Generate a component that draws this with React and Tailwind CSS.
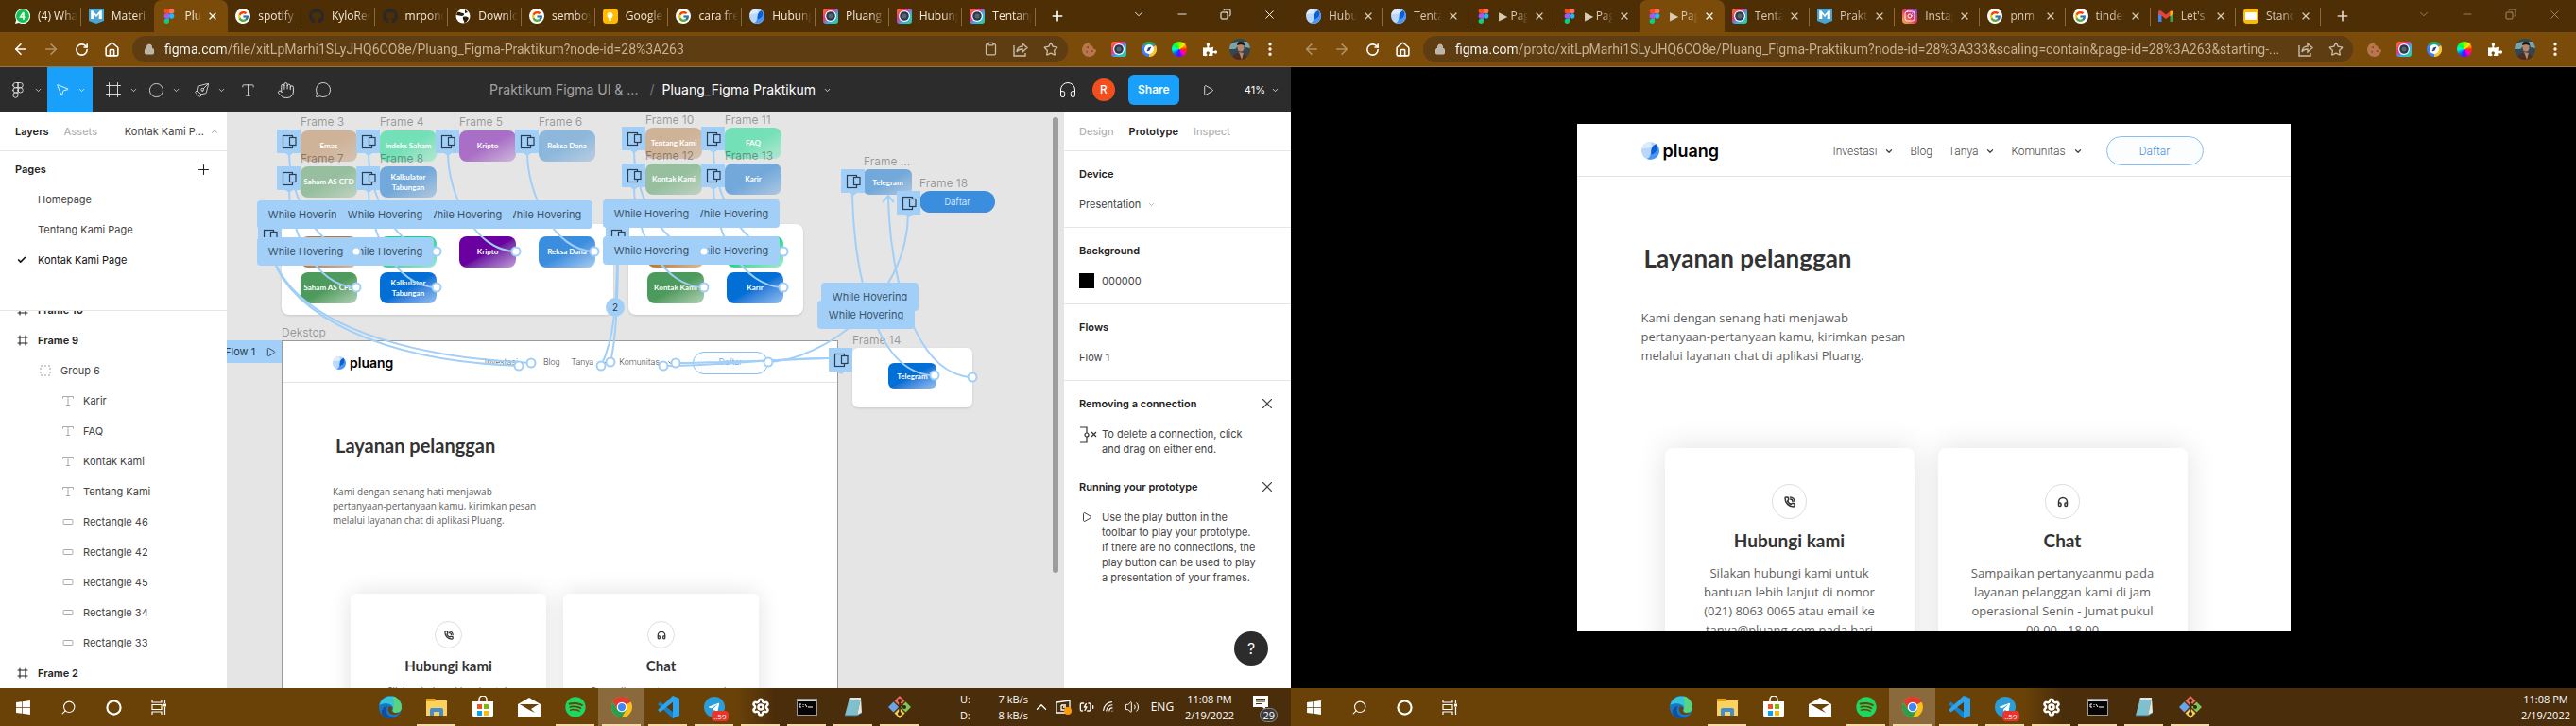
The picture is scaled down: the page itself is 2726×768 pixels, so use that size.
import React from "react";
import {
  ArrowLeft, ArrowRight, RotateCw, House, Lock, Clipboard, Star, EllipsisVertical, X, Plus, Minus,
  ChevronDown, ChevronUp, Frame as FrameIcon, Circle, PenTool, Type, Hand, MessageCircle, Figma, Headphones,
  Play, MousePointer2, Check, Search, Wifi, Volume2, BatteryCharging, Copy, Settings, PhoneCall,
  Instagram,
} from "lucide-react";
import { FaGithub, FaSpotify, FaPuzzlePiece, FaCookieBite, FaWindows, FaTelegramPlane, FaLightbulb } from "react-icons/fa";
import { FcGoogle } from "react-icons/fc";

/* ---------- small drawings ---------- */

const FigmaMark = () => (
  <svg viewBox="0 0 16 24" className="h-4 w-4">
    <path d="M4 0h4v8H4a4 4 0 010-8z" fill="#f24e1e" />
    <path d="M8 0h4a4 4 0 010 8H8z" fill="#ff7262" />
    <path d="M4 8h4v8H4a4 4 0 010-8z" fill="#a259ff" />
    <circle cx="12" cy="12" r="4" fill="#1abcfe" />
    <path d="M4 16h4v4a4 4 0 11-4-4z" fill="#0acf83" />
  </svg>
);

const PluangMark = ({ className = "h-4 w-4" }) => (
  <svg viewBox="0 0 20 20" className={className}>
    <circle cx="10" cy="10" r="10" fill="#b9d7fb" />
    <path d="M10 0a10 10 0 00-9.800 8 L12 6z" fill="#dcebfd" />
    <path d="M20 10A10 10 0 016 19c4-1 4-6 6-9s5-5 6-5.500A10 10 0 0120 10z" fill="#4a95f7" />
    <path d="M16.500 2.400c2.500 4 1.500 10-5.500 12-1-6 1-10.500 5.500-12z" fill="#0b5fd0" />
  </svg>
);

const CameraMark = () => (
  <svg viewBox="0 0 16 16" className="h-4 w-4">
    <defs>
      <linearGradient id="cam" x1="0" y1="0" x2="1" y2="1">
        <stop offset="0" stopColor="#ff7a1a" />
        <stop offset=".35" stopColor="#ec2f87" />
        <stop offset=".65" stopColor="#29b6f6" />
        <stop offset="1" stopColor="#35d07f" />
      </linearGradient>
    </defs>
    <rect width="16" height="16" rx="3" fill="url(#cam)" />
    <circle cx="8" cy="8" r="6" fill="#fff" />
    <circle cx="8" cy="8" r="4.800" fill="#2b3a45" />
    <circle cx="8" cy="8" r="2.500" fill="#536675" />
  </svg>
);

const ChatMark = () => (
  <svg viewBox="0 0 16 16" className="h-4 w-4">
    <path d="M0 16l1.200-4A8 8 0 114 14.900z" fill="#fff" />
    <circle cx="8" cy="8" r="7" fill="#12c350" />
    <path d="M8.800 4L5.500 9h5M9 4v8" stroke="#fff" strokeWidth="1.500" fill="none" />
  </svg>
);

const MediumMark = () => (
  <svg viewBox="0 0 16 16" className="h-4 w-4">
    <path d="M0 0h16v13l-8 3-8-3z" fill="#4aa5d3" />
    <path d="M3 11V3h1l4 5 4-5h1v8M4.500 4v7M11.500 4v7" stroke="#fff" strokeWidth="1.600" fill="none" />
  </svg>
);

const GlobeMark = () => (
  <svg viewBox="0 0 16 16" className="h-4 w-4">
    <circle cx="8" cy="8" r="7.500" fill="#fff" />
    <path d="M2 4c3-1 4 1 6 1s1 3-1 3-4-1-6-1zM8 9c3-1 5 0 6 1-1 3-3 5-5 5 1-2-2-3-1-6zM10 1l3 3-3 1z" fill="#2c1c05" />
  </svg>
);

const KeepMark = () => (
  <span className="flex h-4 w-4 items-center justify-center rounded-sm bg-[#ffbb00] text-[9px] text-white">
    <FaLightbulb />
  </span>
);

const GoogleMark = () => (
  <span className="flex h-4 w-4 items-center justify-center rounded-full bg-white text-[13px]">
    <FcGoogle />
  </span>
);

const MailMark = () => (
  <svg viewBox="0 0 16 12" className="h-4 w-4">
    <path d="M0 12V1h3.500v11z" fill="#4285f4" />
    <path d="M12.500 12V1H16v11z" fill="#34a853" />
    <path d="M0 1.500C0 0 2-.5 3 .5l5 4 5-4c1-1 3-.5 3 1V3L8 9 0 3z" fill="#ea4335" />
    <path d="M12.500 1L16 .8V4l-3.500 2.500z" fill="#fbbc04" />
  </svg>
);

const SlidesMark = () => (
  <span className="flex h-4 w-4 items-center justify-center rounded-sm bg-[#ffba00]">
    <span className="h-2 w-3 bg-white" />
  </span>
);

const InstaMark = () => (
  <span className="flex h-4 w-4 items-center justify-center rounded bg-linear-to-tr from-[#fdb32f] via-[#e4315f] to-[#7a3bd0] text-white">
    <Instagram size={12} />
  </span>
);

const GithubMark = () => <FaGithub size={16} color="#24292e" />;

const CompassMark = () => (
  <svg viewBox="0 0 16 16" className="h-4 w-4">
    <circle cx="8" cy="8" r="8" fill="#3d7ff0" />
    <path d="M2 2.500a8 8 0 0112 0L8 8z" fill="#27a75b" />
    <path d="M15 4a8 8 0 01-7 12V8z" fill="#fcc32c" />
    <circle cx="8" cy="8" r="5" fill="#fff" />
    <path d="M5.500 10.500l1.500-4 3.500-1-2 4z" fill="#1e4b7c" />
  </svg>
);

const WheelMark = () => (
  <span className="h-4 w-4 rounded-full bg-[conic-gradient(#7dff00,#ffe600,#ff2a00,#ff00c8,#5a00ff,#0066ff,#00ffd0,#00ff3c,#7dff00)]" />
);

const Avatar = () => (
  <svg viewBox="0 0 22 22" className="h-[22px] w-[22px]">
    <clipPath id="face"><circle cx="11" cy="11" r="11" /></clipPath>
    <g clipPath="url(#face)">
      <rect width="22" height="22" fill="#33474f" />
      <path d="M0 6l8-3 4 2-6 6H0zM15 3h7v7l-5-1z" fill="#7ea2ac" />
      <ellipse cx="12" cy="9" rx="3.500" ry="4.500" fill="#b9866b" />
      <path d="M8 7c0-5 8-5 8 0l-4-1z" fill="#17120f" />
      <path d="M3 22c1-8 6-7 9-7s6 1 8 7z" fill="#4c2b28" />
      <path d="M10 14l3 8 2-7z" fill="#b9866b" />
    </g>
  </svg>
);

/* ---------- browser chrome ---------- */

function Tab({ icon, title, active, before, closable, dim }) {
  return (
    <div
      className={
        "relative flex min-w-0 flex-1 items-center pl-2 pr-1 " +
        (active ? "rounded-t-lg bg-[#7b4b09]" : before ? "" : "after:absolute after:right-0 after:top-2 after:h-5 after:w-px after:bg-[#8a6a3a]")
      }
    >
      <button className="flex min-w-0 flex-1 items-center gap-2 text-left">
        <span className="flex h-4 w-4 shrink-0 items-center justify-center">{icon}</span>
        <span
          className={
            "min-w-0 flex-1 overflow-hidden whitespace-nowrap text-xs [mask-image:linear-gradient(90deg,#000_60%,transparent)] " +
            (dim ? "text-[#d8cbb5]" : "text-[#f5ead8]")
          }
        >
          {title}
        </span>
      </button>
      {(active || closable) && (
        <button aria-label="Close tab" className={"flex w-6 shrink-0 justify-center " + (active ? "text-white" : "text-[#d8cbb5]")}>
          <X size={12} strokeWidth={2.500} />
        </button>
      )}
    </div>
  );
}

function BrowserChrome({ tabs, url, backActive, clipboard, closable, dim }) {
  const activeIndex = tabs.findIndex((t) => t.active);
  return (
    <header className="shrink-0 font-['Open_Sans',sans-serif]">
      <div className="flex h-[34px] bg-[#4d2e05]">
        <div className="flex min-w-0 flex-1 pl-2">
          {tabs.map((t, i) => (
            <Tab key={i} {...t} before={i === activeIndex - 1} closable={closable} dim={dim} />
          ))}
        </div>
        <button aria-label="New tab" className={"flex w-[46px] items-center justify-center " + (dim ? "text-[#e0d5c5]" : "text-white")}>
          <Plus size={16} strokeWidth={2.500} />
        </button>
        <div className={"ml-10 flex pb-1 " + (dim ? "text-[#a08c6c]" : "text-white")}>
          <button aria-label="Search tabs" className="flex w-[46px] items-center justify-center"><ChevronDown size={14} strokeWidth={1.500} /></button>
          <button aria-label="Minimize" className="flex w-[46px] items-center justify-center"><Minus size={14} strokeWidth={1.500} /></button>
          <button aria-label="Restore" className="flex w-[46px] items-center justify-center"><Copy size={12} strokeWidth={2} className="-scale-x-100" /></button>
          <button aria-label="Close" className="flex w-[46px] items-center justify-center"><X size={15} strokeWidth={1.500} /></button>
        </div>
      </div>
      <div className="flex h-[37px] items-center border-b border-[#9a7440] bg-[#7b4b09] pl-1.5 pr-1.5 text-white">
        <button aria-label="Back" className={"flex w-8 justify-center " + (backActive ? "" : "text-[#b3936a]")}><ArrowLeft size={18} strokeWidth={2.200} /></button>
        <button aria-label="Forward" className="flex w-8 justify-center text-[#b3936a]"><ArrowRight size={18} strokeWidth={2.200} /></button>
        <button aria-label="Reload" className="flex w-8 justify-center"><RotateCw size={15} strokeWidth={2.500} /></button>
        <button aria-label="Home" className="flex w-8 justify-center"><House size={17} strokeWidth={2.200} /></button>
        <div className="ml-1.5 flex h-7 flex-1 items-center gap-2.5 rounded-full bg-[#5e3d12] pl-3 pr-0.5 text-[#c9bda8]">
          <Lock size={12} fill="#b9b4ac" className="shrink-0" />
          <input
            aria-label="Address"
            readOnly
            value={url}
            className="min-w-0 flex-1 truncate bg-[linear-gradient(90deg,#fff_65px,#c9b596_65px)] bg-clip-text font-['Roboto',sans-serif] text-sm text-transparent outline-none"
          />
          <div className="flex">
            {clipboard && <button aria-label="Clipboard" className="flex w-8 justify-center"><Clipboard size={15} /></button>}
            <button aria-label="Share page" className="flex w-8 justify-center">
              <svg viewBox="0 0 16 16" className="h-4 w-4" fill="none" stroke="currentColor" strokeWidth="1.400">
                <path d="M1 4v11h12v-3M4 11c0-4 3-6 6-6V2l5 4.500L10 11V8c-3 0-5 1-6 3z" />
              </svg>
            </button>
            <button aria-label="Bookmark" className="flex w-8 justify-center"><Star size={16} /></button>
          </div>
        </div>
        <div className="ml-1.5 flex items-center">
          <button aria-label="Cookies" className="flex w-8 justify-center"><FaCookieBite size={15} color="#b8754e" /></button>
          <button aria-label="Camera" className="flex w-8 justify-center"><CameraMark /></button>
          <button aria-label="Compass" className="flex w-8 justify-center"><CompassMark /></button>
          <button aria-label="Color wheel" className="flex w-8 justify-center"><WheelMark /></button>
          <button aria-label="Extensions" className="flex w-8 justify-center"><FaPuzzlePiece size={15} /></button>
          <button aria-label="Profile" className="flex w-8 justify-center"><Avatar /></button>
          <button aria-label="Menu" className="flex w-8 justify-center"><EllipsisVertical size={18} strokeWidth={2.500} /></button>
        </div>
      </div>
    </header>
  );
}

/* ---------- taskbar ---------- */

const EdgeMark = () => (
  <svg viewBox="0 0 24 24" className="h-6 w-6">
    <circle cx="12" cy="12" r="12" fill="#1577c8" />
    <path d="M.3 10A12 12 0 0124 12c0 4-3 6-6 6s-4-2-3-4c1-5-8-8-14.700-4z" fill="#36c5d8" />
    <path d="M14 .3A12 12 0 0124 12c0 4-3 6-6 6s-4-2-3-4c2-5 1-10-1-13.700z" fill="#57d47c" />
    <path d="M9 11c-4 5 0 13 9 11a12 12 0 01-6 2C4 24 1 18 4 14c1-2 3-3 5-3z" fill="#0f4fa0" />
    <path d="M10 12c2-2 5 0 4 2s0 4 4 4c3 0 4-1 4-1-3 5-14 4-12-5z" fill="#6a420a" />
  </svg>
);

const ExplorerMark = () => (
  <svg viewBox="0 0 22 18" className="h-5 w-[22px]">
    <path d="M0 0h9l1 2h12v16H0z" fill="#fcd25d" />
    <path d="M0 0h9l1 3H0z" fill="#e5a412" />
    <path d="M4 18v-6a2 2 0 012-2h10a2 2 0 012 2v6h-4v-4H8v4z" fill="#3f8fd6" />
  </svg>
);

const StoreMark = () => (
  <svg viewBox="0 0 22 24" className="h-6 w-[22px]">
    <path d="M7 7V4a4 4 0 018 0v3" fill="none" stroke="#fff" strokeWidth="1.500" />
    <path d="M0 6h22v14a3 3 0 01-3 3H3a3 3 0 01-3-3z" fill="#fff" />
    <path d="M5 9h5v5H5z" fill="#f25022" /><path d="M12 9h5v5h-5z" fill="#7fba00" />
    <path d="M5 16h5v5H5z" fill="#00a4ef" /><path d="M12 16h5v5h-5z" fill="#ffb900" />
  </svg>
);

const EnvelopeMark = () => (
  <svg viewBox="0 0 24 20" className="h-5 w-6">
    <path d="M12 0l12 7v13H0V7z" fill="#fff" />
    <path d="M2 7h20l-8 5 4 4-6-3z" fill="#6a420a" />
  </svg>
);

const ChromeMark = () => (
  <svg viewBox="0 0 24 24" className="h-[22px] w-[22px]">
    <circle cx="12" cy="12" r="12" fill="#fbc116" />
    <path d="M12 12L1.600 6A12 12 0 0122.400 6z" fill="#e33b2e" />
    <path d="M12 6h10.400A12 12 0 001.600 6l5.200 9z" fill="#e33b2e" />
    <path d="M1.600 6a12 12 0 0010.400 18l5.200-9L12 12l-5.200 3z" fill="#2a9e4d" />
    <circle cx="12" cy="12" r="5.800" fill="#fff" />
    <circle cx="12" cy="12" r="4.500" fill="#4285f4" />
  </svg>
);

const CodeMark = () => (
  <svg viewBox="0 0 24 24" className="h-6 w-6">
    <path d="M17 0l7 3v18l-7 3L1 9l2.500-2.500L17 17z" fill="#1481cc" />
    <path d="M17 24L24 21V3l-7-3v7L3.500 17.500 1 15 17 0v7z" fill="#2ea3ee" />
    <path d="M17 7v10l-6.500-5z" fill="#5a380a" />
  </svg>
);

const TelegramMark = () => (
  <span className="relative flex h-[22px] w-[22px] items-center justify-center rounded-full bg-[#2a9ed8] text-white">
    <FaTelegramPlane size={13} />
    <span className="absolute -bottom-1 -right-1 rounded-sm bg-[#e8352e] px-0.5 text-[8px] leading-[11px]">..59</span>
  </span>
);

const ConsoleMark = () => (
  <svg viewBox="0 0 22 18" className="h-[18px] w-[22px]">
    <rect x=".5" y=".5" width="21" height="17" fill="#050505" stroke="#9a9a9a" />
    <path d="M1 1h20v2H1z" fill="#d5d5d5" />
    <path d="M5 6H3v3h2M7 6v1M7 8v1M9 6l2 3M12 9h5" stroke="#fff" fill="none" />
  </svg>
);

const NotepadMark = () => (
  <svg viewBox="0 0 22 22" className="h-[22px] w-[22px]">
    <path d="M7 1h12l-4 19H2z" fill="#7fc0cf" />
    <path d="M7 1h12v3H6z" fill="#dce9ec" />
    <path d="M15 20l4-19 1 16z" fill="#e9e9e4" />
    <path d="M2 20h13l5-3" stroke="#456b75" fill="none" />
  </svg>
);

const GitMark = () => (
  <svg viewBox="0 0 24 24" className="h-6 w-6">
    <path d="M12 0l5.500 5.500L12 11 6.500 5.500z" fill="#ef6b5b" />
    <path d="M5.500 6.500L11 12l-5.500 5.500L0 12z" fill="#6aa5e8" />
    <path d="M18.500 6.500L24 12l-5.500 5.500L13 12z" fill="#80c65a" />
    <path d="M12 13l5.500 5.500L12 24l-5.500-5.500z" fill="#f3cf58" />
    <path d="M12 4v15M12 8l5 4" stroke="#3a2508" strokeWidth="1.500" fill="none" />
    <circle cx="12" cy="19" r="2" fill="#3a2508" /><circle cx="17" cy="12" r="2" fill="#3a2508" /><circle cx="12" cy="5" r="2" fill="#3a2508" />
  </svg>
);

const apps = [
  { name: "Edge", icon: <EdgeMark /> },
  { name: "File Explorer", icon: <ExplorerMark />, running: true },
  { name: "Store", icon: <StoreMark /> },
  { name: "Mail", icon: <EnvelopeMark /> },
  { name: "Spotify", icon: <FaSpotify size={22} color="#1ed760" />, running: true },
  { name: "Chrome", icon: <ChromeMark />, running: true, focused: true },
  { name: "Code", icon: <CodeMark />, running: true },
  { name: "Telegram", icon: <TelegramMark />, running: true },
  { name: "Settings", icon: <Settings size={20} color="#fff" strokeWidth={3} />, running: true },
  { name: "Console", icon: <ConsoleMark />, running: true },
  { name: "Notepad", icon: <NotepadMark />, running: true },
  { name: "Git", icon: <GitMark />, running: true },
];

function Clock() {
  return (
    <div className="text-center text-[11px] leading-[17px]">
      <div>11:08 PM</div>
      <div>2/19/2022</div>
    </div>
  );
}

function Taskbar({ tray }) {
  return (
    <footer className="flex h-10 shrink-0 items-stretch justify-between bg-[linear-gradient(90deg,#6a4208_0%,#6a4208_57%,#4a2d0a_60%)] font-['Open_Sans',sans-serif] text-white">
      <div className="flex">
        <div className="flex">
          <button aria-label="Start" className="flex w-12 items-center justify-center"><FaWindows size={17} /></button>
          <button aria-label="Search" className="flex w-12 items-center justify-center"><Search size={17} strokeWidth={1.500} className="-scale-x-100" /></button>
          <button aria-label="Cortana" className="flex w-12 items-center justify-center"><Circle size={17} strokeWidth={3} /></button>
          <button aria-label="Task view" className="flex w-12 items-center justify-center">
            <svg viewBox="0 0 17 16" className="h-4 w-[17px]" fill="none" stroke="#fff" strokeWidth="1.200">
              <path d="M1 0v3h10V0M1 16v-3h10v3M1 5.500h10v5H1zM14.500 0v4M14.500 8v8" />
              <path d="M13 4.500h3v3h-3z" fill="#fff" stroke="none" />
            </svg>
          </button>
        </div>
        <div className="ml-[196px] flex">
          {apps.map((a) => (
            <button
              key={a.name}
              aria-label={a.name}
              className={
                "relative flex w-[49px] items-center justify-center " +
                (a.running ? "after:absolute after:inset-x-1 after:bottom-0 after:h-0.5 after:bg-[#f6d9ac] " : "") +
                (a.focused ? "bg-[#8a6a3c]" : "")
              }
            >
              {a.icon}
            </button>
          ))}
        </div>
      </div>
      {tray ? (
        <div className="flex items-center pr-3 text-[11px]">
          <div className="mr-0.5 grid grid-cols-[40px_32px] leading-[17px]">
            <span>U:</span><span className="text-right">7 kB/s</span>
            <span>D:</span><span className="text-right">8 kB/s</span>
          </div>
          <button aria-label="Hidden icons" className="flex w-6 justify-center"><ChevronUp size={18} strokeWidth={1.800} /></button>
          <button aria-label="Display" className="flex w-6 justify-center">
            <svg viewBox="0 0 18 16" className="h-4 w-[18px]" fill="none" stroke="#fff" strokeWidth="1.300">
              <path d="M1 3l14-2v13H1zM6 6h5M6 6v5h5M11 8H8" /><circle cx="13" cy="12" r="4" fill="#ff9a0a" stroke="none" />
            </svg>
          </button>
          <button aria-label="Battery" className="flex w-6 justify-center"><BatteryCharging size={16} strokeWidth={2} /></button>
          <button aria-label="Network" className="flex w-6 justify-center"><Wifi size={15} strokeWidth={1.800} className="rotate-[-45deg]" /></button>
          <button aria-label="Volume" className="flex w-6 justify-center"><Volume2 size={16} strokeWidth={1.500} /></button>
          <button className="ml-1 w-8 text-xs">ENG</button>
          <div className="ml-2"><Clock /></div>
          <button aria-label="Notifications" className="relative ml-3 flex h-10 w-9 items-center justify-center">
            <svg viewBox="0 0 16 16" className="mb-2 mr-1 h-4 w-4"><path d="M0 0h16v12h-3v3l-3-3H0z" fill="#fff" /><path d="M3 3.500h10M3 6h10M3 8.500h7" stroke="#4a2d0a" /></svg>
            <span className="absolute bottom-1 right-0.5 rounded-full border border-[#8a8a8a] bg-[#3a3a3a] px-0.5 text-[11px] leading-[13px]">29</span>
          </button>
        </div>
      ) : (
        <div className="flex items-center pr-1.5"><Clock /></div>
      )}
    </footer>
  );
}

/* ---------- Pluang landing page, in two scales ---------- */

const scales = {
  small: {
    header: "h-11 pl-[53px] pr-[73px]",
    mark: "h-3.5 w-3.5",
    brand: "text-[14px] leading-5 gap-1",
    nav: "gap-3 text-[9px]",
    item: "gap-2",
    chevron: 7,
    button: "ml-2 h-6 w-20",
    title: "mt-[54px] pl-14 text-[20px] leading-6",
    lead: "mt-[30px] pl-[53px] text-[10px] leading-[15px]",
    cards: "mt-[70px] pl-[72px] gap-[18px]",
    card: "w-[207px] h-[220px] pt-[29px] shadow-[0_0_24px_rgba(0,0,0,0.12)] rounded-md",
    ring: "h-[29px] w-[29px]",
    glyph: 10,
    cardTitle: "mt-2 text-[15px] leading-5",
    cardText: "mt-2.5 text-[10px] leading-[15px]",
  },
  large: {
    header: "h-[56px] pl-[68px] pr-[92px]",
    mark: "h-[19px] w-[19px]",
    brand: "text-[18px] leading-6 gap-1",
    nav: "gap-[17px] text-[12px]",
    item: "gap-2",
    chevron: 10,
    button: "ml-2 h-[31px] w-[103px]",
    title: "mt-[70px] pl-[71px] text-[26px] leading-8",
    lead: "mt-[37px] pl-[68px] text-[13px] leading-5",
    cards: "mt-[88px] pl-[93px] gap-[25px]",
    card: "w-[264px] h-[280px] pt-[38px] shadow-[0_0_32px_rgba(0,0,0,0.12)] rounded-lg",
    ring: "h-[37px] w-[37px]",
    glyph: 12,
    cardTitle: "mt-[11px] text-[19px] leading-6",
    cardText: "mt-3 text-[13px] leading-5",
  },
};

function LandingPage({ size }) {
  const s = scales[size];
  const card = "shrink-0 bg-white flex flex-col items-center text-center " + s.card;
  const ring = "flex items-center justify-center rounded-full border border-[#dedede] text-[#333] " + s.ring;
  return (
    <div className="font-['Open_Sans',sans-serif] text-[#5f5f5f]">
      <div className={"flex items-center justify-between border-b border-[#e3e3e3] pt-0.5 " + s.header}>
        <div className={"flex items-center font-['Inter',sans-serif] font-semibold text-black " + s.brand}>
          <PluangMark className={s.mark} />
          <span>pluang</span>
        </div>
        <nav className={"flex items-center font-['Roboto',sans-serif] font-light text-[#444] " + s.nav}>
          <a href="#investasi" className={"flex items-center " + s.item}>Investasi <ChevronDown size={s.chevron} strokeWidth={3} /></a>
          <a href="#blog">Blog</a>
          <a href="#tanya" className={"flex items-center " + s.item}>Tanya <ChevronDown size={s.chevron} strokeWidth={3} /></a>
          <a href="#komunitas" className={"flex items-center " + s.item}>Komunitas <ChevronDown size={s.chevron} strokeWidth={3} /></a>
          <button className={"rounded-full border border-[#8abdf0] bg-[#fbfdff] text-[#3b8ede] " + s.button}>Daftar</button>
        </nav>
      </div>
      <h1 className={"font-['Lato',sans-serif] font-bold text-[#333] " + s.title}>Layanan pelanggan</h1>
      <p className={s.lead}>
        Kami dengan senang hati menjawab<br />pertanyaan-pertanyaan kamu, kirimkan pesan<br />melalui layanan chat di aplikasi Pluang.
      </p>
      <div className={"flex " + s.cards}>
        <section className={card}>
          <div className={ring}><PhoneCall size={s.glyph} strokeWidth={3} /></div>
          <h2 className={"font-['Lato',sans-serif] font-bold text-[#333] " + s.cardTitle}>Hubungi kami</h2>
          <p className={s.cardText}>Silakan hubungi kami untuk<br />bantuan lebih lanjut di nomor<br />(021) 8063 0065 atau email ke<br />tanya@pluang.com pada hari</p>
        </section>
        <section className={card}>
          <div className={ring}><Headphones size={s.glyph} strokeWidth={3} /></div>
          <h2 className={"font-['Lato',sans-serif] font-bold text-[#333] " + s.cardTitle}>Chat</h2>
          <p className={s.cardText}>Sampaikan pertanyaanmu pada<br />layanan pelanggan kami di jam<br />operasional Senin - Jumat pukul<br />09.00 - 18.00</p>
        </section>
      </div>
    </div>
  );
}

/* ---------- Figma editor ---------- */

function FigmaToolbar() {
  const tool = "flex h-full items-center justify-center gap-2";
  return (
    <div className="grid h-12 shrink-0 grid-cols-[1fr_auto_1fr] items-center bg-[#2c2c2c] text-xs text-white">
      <div className="flex h-full items-center text-[#e6e6e6]">
        <button aria-label="Main menu" className={tool + " w-[50px] pl-1"}><Figma size={18} strokeWidth={1.200} /><ChevronDown size={9} /></button>
        <button aria-label="Move" className={tool + " w-12 bg-[#18a0fb] text-white"}><MousePointer2 size={16} strokeWidth={1.300} /><ChevronDown size={9} /></button>
        <button aria-label="Frame" className={tool + " w-[52px] pl-2"}><FrameIcon size={18} strokeWidth={1.200} /><ChevronDown size={9} /></button>
        <button aria-label="Shape" className={tool + " w-12"}><Circle size={17} strokeWidth={1.200} /><ChevronDown size={9} /></button>
        <button aria-label="Pen" className={tool + " w-12"}><PenTool size={17} strokeWidth={1.200} className="rotate-90" /><ChevronDown size={9} /></button>
        <button aria-label="Text" className={tool + " w-8"}><Type size={17} strokeWidth={1.200} /></button>
        <button aria-label="Hand" className={tool + " w-12"}><Hand size={19} strokeWidth={1.200} /></button>
        <button aria-label="Comment" className={tool + " w-8"}><MessageCircle size={18} strokeWidth={1.200} /></button>
      </div>
      <div className="flex items-center gap-2 pl-8 text-[14px] text-white">
        <span className="text-[#a3a3a3]">Praktikum Figma UI &amp; ...</span>
        <span className="ml-1 text-[#777]">/</span>
        <button className="flex items-center gap-2">Pluang_Figma Praktikum <ChevronDown size={9} /></button>
      </div>
      <div className="flex items-center justify-end gap-6 pr-3">
        <div className="flex items-center gap-5">
          <Headphones size={20} strokeWidth={1.200} />
          <span className="-mx-1 flex h-6 w-6 items-center justify-center rounded-full bg-[#f24e1e] font-medium">R</span>
        </div>
        <button className="-ml-1.5 h-8 w-[54px] rounded-md bg-[#18a0fb] font-semibold">Share</button>
        <button aria-label="Present"><Play size={13} strokeWidth={1.500} /></button>
        <button className="ml-2 flex items-center gap-1.5 text-[11px]">41% <ChevronDown size={9} /></button>
      </div>
    </div>
  );
}

const layers = [
  { name: "Frame 9", kind: "frame" },
  { name: "Group 6", kind: "group" },
  { name: "Karir", kind: "text" },
  { name: "FAQ", kind: "text" },
  { name: "Kontak Kami", kind: "text" },
  { name: "Tentang Kami", kind: "text" },
  { name: "Rectangle 46", kind: "rect" },
  { name: "Rectangle 42", kind: "rect" },
  { name: "Rectangle 45", kind: "rect" },
  { name: "Rectangle 34", kind: "rect" },
  { name: "Rectangle 33", kind: "rect" },
  { name: "Frame 2", kind: "frame" },
];

const layerStyles = {
  frame: "pl-[18px] font-semibold text-[#222]",
  group: "pl-[42px]",
  text: "pl-[66px]",
  rect: "pl-[66px]",
};

const LayerIcon = ({ kind }) => {
  if (kind === "frame") return <FrameIcon size={12} strokeWidth={2.200} />;
  if (kind === "group")
    return (
      <svg viewBox="0 0 12 12" className="h-3 w-3">
        <rect x="1" y="1" width="10" height="10" fill="none" stroke="#999" strokeDasharray="2 2" />
      </svg>
    );
  if (kind === "text")
    return (
      <svg viewBox="0 0 12 12" className="h-3 w-3" fill="none" stroke="#aaa">
        <path d="M.500 3.500v-2h11v2M6 1.500v9M4 10.500h4" />
      </svg>
    );
  return (
    <svg viewBox="0 0 12 12" className="h-3 w-3">
      <rect x="1" y="3.500" width="10" height="5" rx="1" fill="none" stroke="#aaa" />
    </svg>
  );
};

function LayersPanel() {
  return (
    <aside className="flex w-60 shrink-0 flex-col overflow-hidden bg-white text-[11px] text-[#444]">
      <div className="flex h-[41px] shrink-0 items-center border-b border-[#e5e5e5] px-4">
        <button className="font-semibold text-[#222]">Layers</button>
        <button className="ml-4 font-medium text-[#b3b3b3]">Assets</button>
        <button className="ml-auto mr-[-8px] flex items-center gap-1.5">Kontak Kami P... <ChevronUp size={10} color="#888" /></button>
      </div>
      <div className="h-[169px] shrink-0 border-b border-[#e5e5e5] pt-[3px]">
        <div className="flex h-8 items-center justify-between pl-4 pr-4 font-semibold text-[#222]">
          Pages
          <button aria-label="Add page"><Plus size={17} strokeWidth={1.500} /></button>
        </div>
        <button className="flex h-8 w-full items-center pl-10">Homepage</button>
        <button className="flex h-8 w-full items-center pl-10">Tentang Kami Page</button>
        <button className="flex h-8 w-full items-center gap-3 pl-[18px] text-[#111]"><Check size={10} strokeWidth={4} />Kontak Kami Page</button>
      </div>
      <div className="flex min-h-0 flex-1 flex-col overflow-hidden">
        <div className="flex h-[15px] shrink-0 flex-col justify-end overflow-hidden">
          <button className="flex h-8 shrink-0 items-center gap-2.5 pl-[18px] font-semibold text-[#222]"><FrameIcon size={12} strokeWidth={2.200} />Frame 10</button>
        </div>
        {layers.map((l) => (
          <button key={l.name} className={"flex h-8 shrink-0 items-center gap-2.5 " + layerStyles[l.kind]}>
            <LayerIcon kind={l.kind} />
            {l.name}
          </button>
        ))}
      </div>
    </aside>
  );
}

function PropertiesPanel() {
  const section = "flex h-[81px] flex-col justify-between border-b border-[#e5e5e5] px-4 pb-4 pt-4";
  const head = "font-semibold text-[#222]";
  return (
    <aside className="relative flex w-60 shrink-0 flex-col bg-white text-[11px] leading-4 text-[#444]">
      <div className="flex h-[41px] items-center gap-4 border-b border-[#e5e5e5] px-4">
        <button className="font-medium text-[#b3b3b3]">Design</button>
        <button className="font-semibold text-[#222]">Prototype</button>
        <button className="font-medium text-[#b3b3b3]">Inspect</button>
      </div>
      <div className={section}>
        <label htmlFor="device" className={head}>Device</label>
        <div className="flex items-center gap-1.5">
          <select id="device" className="appearance-none bg-transparent"><option>Presentation</option></select>
          <ChevronDown size={9} color="#999" />
        </div>
      </div>
      <div className={section}>
        <label htmlFor="background" className={head}>Background</label>
        <div className="flex items-center gap-2">
          <span className="h-4 w-4 bg-black" />
          <input id="background" readOnly value="000000" className="w-24 outline-none" />
        </div>
      </div>
      <div className={section}>
        <h3 className={head}>Flows</h3>
        <button className="text-left">Flow 1</button>
      </div>
      <div className="flex flex-col px-4 pt-4">
        <div className="flex h-4 items-center justify-between">
          <h3 className={head}>Removing a connection</h3>
          <button aria-label="Dismiss connection tip"><X size={18} strokeWidth={1.500} /></button>
        </div>
        <div className="mt-4 flex gap-1">
          <svg viewBox="0 0 20 18" className="h-[18px] w-5 shrink-0" fill="none" stroke="#333" strokeWidth="1.200">
            <path d="M1 1h7v6M8 11v6H1M13 6l5 5M18 6l-5 5" /><circle cx="8" cy="9" r="2" />
          </svg>
          <p>To delete a connection, click<br />and drag on either end.</p>
        </div>
        <div className="mt-6 flex h-4 items-center justify-between">
          <h3 className={head}>Running your prototype</h3>
          <button aria-label="Dismiss prototype tip"><X size={18} strokeWidth={1.500} /></button>
        </div>
        <div className="mt-4 flex gap-2.5">
          <Play size={12} strokeWidth={2} className="ml-0.5 mt-0.5 shrink-0" />
          <p className="whitespace-nowrap">Use the play button in the<br />toolbar to play your prototype.<br />If there are no connections, the<br />play button can be used to play<br />a presentation of your frames.</p>
        </div>
      </div>
      <button className="absolute bottom-6 right-6 h-9 w-9 rounded-full bg-[#2c2c2c] text-base text-white">?</button>
    </aside>
  );
}

/* canvas nodes: positions are canvas coordinates */

const tiles = [
  { text: "Emas", at: "left-[78px] top-[19px]", fill: "from-[#cfb399] to-[#d4c2b1]" },
  { text: "Indeks Saham", at: "left-[162px] top-[19px]", fill: "from-[#74e0b8] to-[#b4e6d2]" },
  { text: "Kripto", at: "left-[246px] top-[19px]", fill: "from-[#a96fc6] to-[#ceb8da]" },
  { text: "Reksa Dana", at: "left-[330px] top-[19px]", fill: "from-[#8db8dc] to-[#bacde0]" },
  { text: "Saham AS CFD", at: "left-[78px] top-[57px]", fill: "from-[#97bf9f] to-[#c0d2c3]" },
  { text: "Kalkulator Tabungan", at: "left-[162px] top-[57px]", fill: "from-[#73a9da] to-[#b0c8df]" },
  { text: "Tentang Kami", at: "left-[443px] top-[16px]", fill: "from-[#cfb399] to-[#d4c2b1]" },
  { text: "FAQ", at: "left-[527px] top-[16px]", fill: "from-[#74e0b8] to-[#b4e6d2]" },
  { text: "Kontak Kami", at: "left-[443px] top-[54px]", fill: "from-[#97bf9f] to-[#c0d2c3]" },
  { text: "Karir", at: "left-[527px] top-[54px]", fill: "from-[#73a9da] to-[#b0c8df]" },
  { text: "", at: "left-[78px] top-[131px]", fill: "from-[#c0772f] to-[#e0bd98]" },
  { text: "", at: "left-[162px] top-[131px]", fill: "from-[#0fd68c] to-[#9aefcf]" },
  { text: "Kripto", at: "left-[246px] top-[131px]", fill: "from-[#6a009f] to-[#c39ad8]" },
  { text: "Reksa Dana", at: "left-[330px] top-[131px]", fill: "from-[#3b8ede] to-[#a9cdf1]" },
  { text: "Saham AS CFD", at: "left-[78px] top-[169px]", fill: "from-[#4d9a5d] to-[#b3d3b9]" },
  { text: "Kalkulator Tabungan", at: "left-[162px] top-[169px]", fill: "from-[#026fd6] to-[#93c1ee]" },
  { text: "", at: "left-[445px] top-[131px]", fill: "from-[#c0772f] to-[#e0bd98]" },
  { text: "", at: "left-[529px] top-[131px]", fill: "from-[#0fd68c] to-[#9aefcf]" },
  { text: "Kontak Kami", at: "left-[445px] top-[169px]", fill: "from-[#4d9a5d] to-[#b3d3b9]" },
  { text: "Karir", at: "left-[529px] top-[169px]", fill: "from-[#026fd6] to-[#93c1ee]" },
];

const frameLabels = [
  { text: "Frame 3", at: "left-[78px] top-[2px]" },
  { text: "Frame 4", at: "left-[162px] top-[2px]" },
  { text: "Frame 5", at: "left-[246px] top-[2px]" },
  { text: "Frame 6", at: "left-[330px] top-[2px]" },
  { text: "Frame 7", at: "left-[78px] top-[41px]" },
  { text: "Frame 8", at: "left-[162px] top-[41px]" },
  { text: "Frame 10", at: "left-[443px] top-0" },
  { text: "Frame 11", at: "left-[527px] top-0" },
  { text: "Frame 12", at: "left-[443px] top-[38px]" },
  { text: "Frame 13", at: "left-[527px] top-[38px]" },
  { text: "Frame ...", at: "left-[674px] top-[44px]" },
  { text: "Frame 18", at: "left-[733px] top-[67px]" },
  { text: "Frame 14", at: "left-[662px] top-[233px]" },
  { text: "Dekstop", at: "left-[58px] top-[225px]" },
];

const overlays = [
  "left-[53px] top-[18px]", "left-[137px] top-[18px]", "left-[221px] top-[18px]", "left-[305px] top-[18px]",
  "left-[53px] top-[57px]", "left-[137px] top-[57px]", "left-[418px] top-[15px]", "left-[502px] top-[15px]",
  "left-[418px] top-[54px]", "left-[502px] top-[54px]", "left-[650px] top-[60px]", "left-[709px] top-[83px]",
  "left-[637px] top-[249px]", "left-[33px] top-[118px]", "left-[401px] top-[118px]",
];

/* later entries are painted above earlier ones */
const triggers = [
  "left-[284px] top-[93px]", "left-[200px] top-[93px]", "left-[32px] top-[93px]", "left-[116px] top-[93px]",
  "left-[116px] top-[132px]", "left-[32px] top-[132px]",
  "left-[482px] top-[92px]", "left-[398px] top-[92px]", "left-[482px] top-[131px]", "left-[398px] top-[131px]",
  "left-[629px] top-[180px]", "left-[625px] top-[199px]",
];

const wires = [
  "M234 43C234 85 262 147 306 147", "M318 43C318 85 346 147 389 147",
  "M66 43C66 85 94 147 137 147", "M150 43C150 85 178 147 222 147",
  "M66 82C66 124 94 185 137 185", "M150 82C150 124 178 185 222 185",
  "M431 41C431 85 461 147 505 147", "M515 41C515 85 545 147 589 147",
  "M431 79C431 124 461 185 505 185", "M515 79C515 124 545 185 589 185",
  "M46 143C55 200 140 262 309 268", "M46 143C62 215 170 258 322 265",
  "M413 143C413 200 410 240 396 268", "M414 143C414 200 412 240 406 264",
  "M462 268C520 268 580 260 637 260", "M475 265C540 264 580 262 637 260",
  "M573 264C630 262 720 200 721 107", "M662 86C664 180 690 278 749 278",
  "M700 88C702 180 730 278 789 280", "M694 95L700 88L706 95",
];

const ports = [
  [306, 147], [389, 147], [137, 147], [222, 147], [137, 185], [222, 185], [505, 147], [589, 147], [505, 185],
  [589, 185], [309, 268], [322, 265], [396, 268], [406, 264], [462, 268], [475, 265], [573, 264], [749, 278], [789, 280],
];

function Canvas() {
  return (
    <main className="relative min-w-0 flex-1 overflow-hidden bg-[#e5e5e5]">
      <div className="absolute left-[58px] top-[118px] h-24 w-[351px] rounded-lg bg-white shadow" />
      <div className="absolute left-[425px] top-[118px] h-24 w-[185px] rounded-lg bg-white shadow" />
      <div className="absolute left-[662px] top-[249px] h-[63px] w-[127px] rounded-md bg-white shadow-sm" />
      <div className="absolute -bottom-16 left-[58px] top-[241px] w-[589px] overflow-hidden border border-[#9b9b9b] bg-white">
        <LandingPage size="small" />
      </div>
      {tiles.map((t, i) => (
        <div
          key={i}
          className={"absolute flex h-[33px] w-[60px] items-center justify-center rounded-lg bg-linear-to-br from-50% text-center font-['Lato',sans-serif] text-[8px] font-bold leading-[11px] text-white " + t.fill + " " + t.at}
        >
          {t.text}
        </div>
      ))}
      <div className="absolute left-[674px] top-[60px] flex h-[27px] w-[51px] items-center justify-center rounded-md bg-linear-to-br from-[#73a9da] from-50% to-[#b0c8df] font-['Lato',sans-serif] text-[8px] font-bold text-white">Telegram</div>
      <div className="absolute left-[700px] top-[265px] flex h-[27px] w-[51px] items-center justify-center rounded-md bg-linear-to-br from-[#026fd6] from-50% to-[#93c1ee] font-['Lato',sans-serif] text-[8px] font-bold text-white">Telegram</div>
      <div className="absolute left-[733px] top-[83px] flex h-[23px] w-20 items-center justify-center rounded-full bg-[#3b8ede] font-['Roboto',sans-serif] text-[10px] font-light text-white">Daftar</div>
      {frameLabels.map((f) => (
        <span key={f.text} className={"absolute whitespace-nowrap text-xs leading-4 text-black/35 " + f.at}>{f.text}</span>
      ))}
      <svg className="absolute left-0 top-0 h-[320px] w-[880px]" fill="none" stroke="#a1cff8" strokeWidth="2">
        {wires.map((d) => <path key={d} d={d} />)}
      </svg>
      {overlays.map((at) => (
        <svg key={at} viewBox="0 0 25 28" className={"absolute h-7 w-[25px] " + at}>
          <path d="M1 0h24v25H17l-4 3-4-3H1a1 1 0 01-1-1V1a1 1 0 011-1z" fill="#a1cff8" />
          <rect x="6.500" y="6.500" width="10" height="13" fill="none" stroke="#2c3e50" strokeWidth="1.200" />
          <rect x="13.500" y="8.500" width="6.500" height="8" fill="#a1cff8" stroke="#2c3e50" strokeWidth="1.200" />
        </svg>
      ))}
      <div className="absolute left-0 top-[241px] flex h-6 w-[58px] items-center justify-between bg-[#a1cff8] pr-1.5 text-[11px] text-[#2c3e50]">
        <span className="-ml-0.5 whitespace-nowrap">Flow 1</span>
        <Play size={11} />
      </div>
      {triggers.map((at) => (
        <div key={at} className={"absolute flex h-[30px] w-[103px] items-center justify-center whitespace-nowrap rounded-sm bg-[#a1cff8] text-[11px] text-[#3c5468] " + at}>
          While Hovering
        </div>
      ))}
      <svg className="absolute left-0 top-0 h-[320px] w-[880px]" fill="none" stroke="#a1cff8" strokeWidth="2">
        {ports.map(([x, y]) => <circle key={x + "-" + y} cx={x} cy={y} r="4.500" fill="#fff" />)}
        <circle cx="411" cy="206" r="9" fill="#a1cff8" />
      </svg>
      <span className="absolute left-[408px] top-[198px] text-[10px] leading-4 text-[#2c3e50]">2</span>
      <div className="absolute bottom-[122px] right-1.5 top-[5px] w-1.5 rounded-full bg-[#9c9c9c]" />
    </main>
  );
}

/* ---------- page ---------- */

const leftTabs = [
  { title: "(4) WhatsApp", icon: <ChatMark /> },
  { title: "Materi - Pra", icon: <MediumMark /> },
  { title: "Pluang_Figma", icon: <FigmaMark />, active: true },
  { title: "spotify", icon: <GoogleMark /> },
  { title: "KyloRen", icon: <GithubMark /> },
  { title: "mrpond", icon: <GithubMark /> },
  { title: "Download", icon: <GlobeMark /> },
  { title: "semboyan", icon: <GoogleMark /> },
  { title: "Google K", icon: <KeepMark /> },
  { title: "cara free", icon: <GoogleMark /> },
  { title: "Hubungi", icon: <PluangMark /> },
  { title: "Pluang", icon: <CameraMark /> },
  { title: "Hubungi", icon: <CameraMark /> },
  { title: "Tentang", icon: <CameraMark /> },
];

const rightTabs = [
  { title: "Hubungi", icon: <PluangMark /> },
  { title: "Tentang", icon: <PluangMark /> },
  { title: "▶ Page", icon: <FigmaMark /> },
  { title: "▶ Page", icon: <FigmaMark /> },
  { title: "▶ Page", icon: <FigmaMark />, active: true },
  { title: "Tentang", icon: <CameraMark /> },
  { title: "Praktik", icon: <MediumMark /> },
  { title: "Instag", icon: <InstaMark /> },
  { title: "pnm", icon: <GoogleMark /> },
  { title: "tinder", icon: <GoogleMark /> },
  { title: "Let's", icon: <MailMark /> },
  { title: "Standu", icon: <SlidesMark /> },
];

export default function App() {
  return (
    <div className="grid h-screen w-full grid-cols-[1366fr_1360fr] overflow-hidden bg-black font-['Inter',sans-serif]">
      <div className="flex min-h-0 min-w-0 flex-col">
        <BrowserChrome
          tabs={leftTabs}
          backActive
          clipboard
          url="figma.com/file/xitLpMarhi1SLyJHQ6CO8e/Pluang_Figma-Praktikum?node-id=28%3A263"
        />
        <FigmaToolbar />
        <div className="flex min-h-0 flex-1">
          <LayersPanel />
          <Canvas />
          <PropertiesPanel />
        </div>
        <Taskbar tray />
      </div>
      <div className="flex min-h-0 min-w-0 flex-col">
        <BrowserChrome
          tabs={rightTabs}
          closable
          dim
          url="figma.com/proto/xitLpMarhi1SLyJHQ6CO8e/Pluang_Figma-Praktikum?node-id=28%3A333&scaling=contain&page-id=28%3A263&starting-..."
        />
        <main className="min-h-0 flex-1 bg-black py-[60px]">
          <div className="mx-auto h-full w-[755px] overflow-hidden bg-white">
            <LandingPage size="large" />
          </div>
        </main>
        <Taskbar />
      </div>
    </div>
  );
}
